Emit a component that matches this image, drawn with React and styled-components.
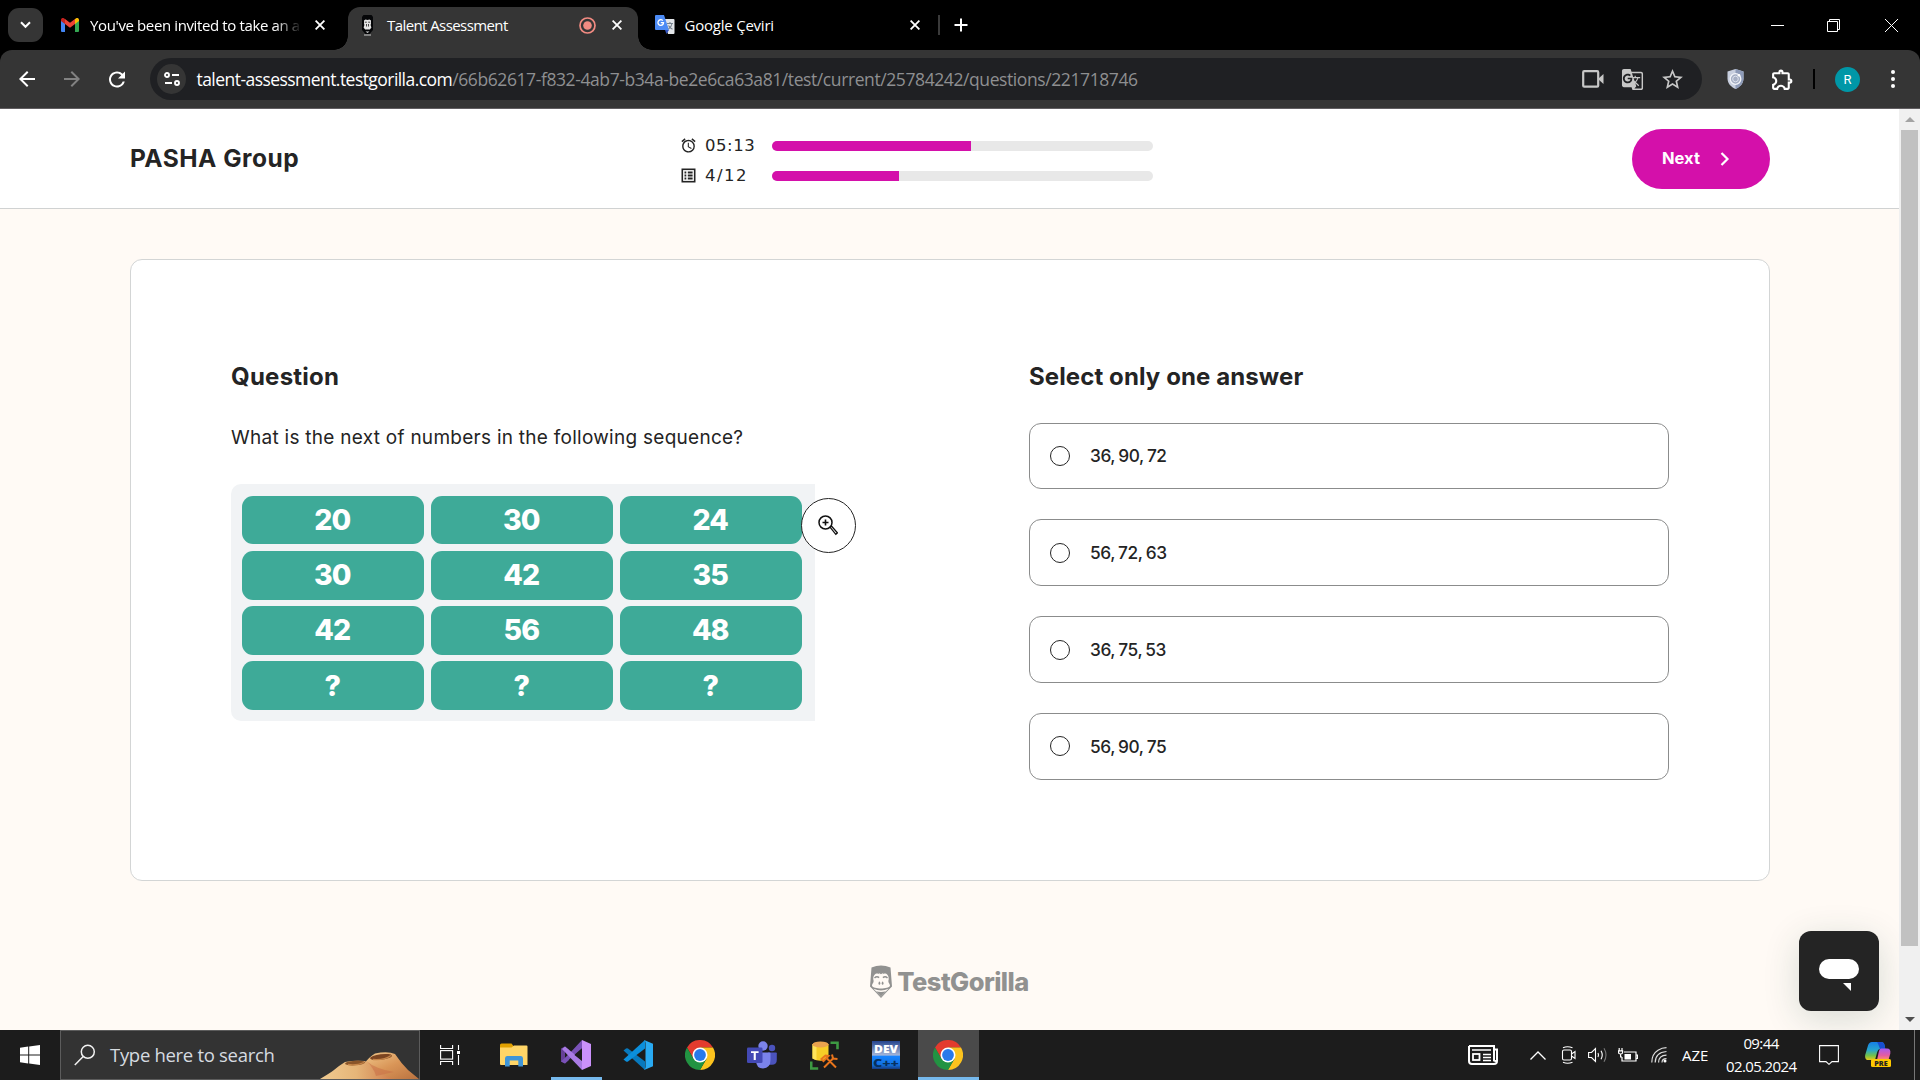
import React from "react";
import styled, { createGlobalStyle, css } from "styled-components";
import {
  MdStarBorder,
  MdOutlineExtension,
  MdGTranslate,
  MdArrowBack,
  MdArrowForward,
  MdRefresh,
  MdAlarm,
} from "react-icons/md";

const GlobalStyle = createGlobalStyle`
  * { box-sizing: border-box; }
  body { margin: 0; overflow: hidden; background: #fffaf5; }
`;

const ui = `"Open Sans", "Noto Sans", sans-serif`;
const sans = `Inter, "Liberation Sans", sans-serif`;

const Screen = styled.div`
  width: 1920px;
  height: 1080px;
  display: flex;
  flex-direction: column;
  overflow: hidden;
  font-family: ${sans};
  color: #242424;
`;

/* ---------- browser chrome ---------- */

const TabStrip = styled.div`
  height: 50px;
  flex: none;
  display: flex;
  align-items: stretch;
  background: #000;
  color: #fff;
  font-family: ${ui};
`;

const TabSearch = styled.div`
  width: 35px;
  height: 34px;
  margin: 8px 0 0 8px;
  border-radius: 11px;
  background: #353535;
  display: flex;
  align-items: center;
  justify-content: center;
`;

const Tab = styled.div`
  position: relative;
  width: ${(p) => p.$w}px;
  margin-top: 7px;
  padding: 0 ${(p) => p.$pr}px 7px ${(p) => p.$pl}px;
  display: flex;
  align-items: center;
  border-radius: 12px 12px 0 0;
  ${(p) =>
    p.$active &&
    css`
      background: #353535;
      &::before,
      &::after {
        content: "";
        position: absolute;
        bottom: 0;
        width: 14px;
        height: 14px;
      }
      &::before {
        left: -14px;
        background: radial-gradient(circle at 0 0, transparent 13.5px, #353535 14px);
      }
      &::after {
        right: -14px;
        background: radial-gradient(circle at 100% 0, transparent 13.5px, #353535 14px);
      }
    `}
`;

const TabTitle = styled.span`
  flex: 1;
  min-width: 0;
  margin-left: ${(p) => p.$ml}px;
  font-size: 15px;
  line-height: 20px;
  letter-spacing: ${(p) => p.$ls || 0}px;
  white-space: nowrap;
  ${(p) =>
    p.$fade &&
    css`
      mask-image: linear-gradient(to right, #000 88%, transparent 101%);
    `}
`;

const TabClose = styled.span`
  display: flex;
  margin-left: ${(p) => p.$ml || 0}px;
`;

const TabDivider = styled.div`
  width: 2px;
  height: 20px;
  margin: 15px 14px 0 0;
  background: #3a3a3a;
`;

const WindowButtons = styled.div`
  margin-left: auto;
  padding-right: 22px;
  display: flex;
  align-items: center;
  gap: 43px;
  svg:last-child {
    margin-left: 2px;
  }
`;

const Toolbar = styled.div`
  height: 59px;
  display: flex;
  align-items: center;
  padding: 0 25px 0 15px;
  background: #353535;
  border-bottom: 1px solid #605d60;
  border-radius: 12px 12px 0 0;
  color: #fff;
  font-family: ${ui};
`;

const ToolbarShell = styled.div`
  flex: none;
  height: 59px;
  background: #000;
`;

const NavIcon = styled.span`
  width: 24px;
  height: 24px;
  display: flex;
  margin-right: ${(p) => p.$mr}px;
  color: ${(p) => (p.$dim ? "#828282" : "#fff")};
`;

const AddressBar = styled.div`
  width: 1552px;
  flex: none;
  height: 42px;
  border-radius: 21px;
  background: #1f2023;
  display: flex;
  align-items: center;
  padding: 0 17px 0 7px;
`;

const SiteInfo = styled.span`
  width: 29px;
  height: 30px;
  border-radius: 50%;
  background: #353535;
  display: flex;
  align-items: center;
  justify-content: center;
`;

const Url = styled.span`
  flex: 1;
  margin-left: 10.5px;
  font-size: 17.5px;
  line-height: 24px;
  letter-spacing: -0.407px;
  color: #8e8f91;
  white-space: nowrap;
`;

const UrlHost = styled.span`
  color: #fff;
  letter-spacing: -0.55px;
`;

const BarIcons = styled.span`
  display: flex;
  align-items: center;
  gap: 16px;
  color: #c7c7c7;
  svg:first-child {
    margin-right: 1px;
  }
`;

const ExtensionArea = styled.div`
  margin-left: 25px;
  flex: 1;
  display: flex;
  align-items: center;
`;

const Extension = styled.span`
  display: flex;
  margin-left: 26px;
`;

const Separator = styled.span`
  width: 2px;
  height: 20px;
  margin: 0 20px 0 18px;
  background: #000;
`;

const Avatar = styled.span`
  width: 25px;
  height: 25px;
  border-radius: 50%;
  background: #0097a7;
  font: 13px Roboto, sans-serif;
  display: flex;
  align-items: center;
  justify-content: center;
`;

const Dots = styled.span`
  margin-left: auto;
  display: flex;
  flex-direction: column;
  gap: 3px;
  i {
    width: 4px;
    height: 4px;
    border-radius: 50%;
    background: #fff;
  }
`;

/* ---------- page ---------- */

const Viewport = styled.div`
  height: 921px;
  flex: none;
  display: flex;
`;

const Page = styled.main`
  position: relative;
  width: 1899px;
  background: #fffaf5;
  display: flex;
  flex-direction: column;
  align-items: center;
  overflow: hidden;
`;

const Header = styled.header`
  width: 100%;
  height: 100px;
  flex: none;
  padding: 0 129px 0 130px;
  display: grid;
  grid-template-columns: 550px 1fr auto;
  align-items: center;
  background: #fff;
  border-bottom: 1px solid #d0d2d2;
`;

const Company = styled.h1`
  margin: 0;
  padding-bottom: 2px;
  font-size: 24.5px;
  line-height: 30px;
  font-weight: 700;
  letter-spacing: 0.5px;
`;

const ProgressList = styled.div`
  display: flex;
  flex-direction: column;
  padding-top: 4.5px;
`;

const ProgressRow = styled.div`
  height: 30px;
  display: flex;
  align-items: center;
`;

const ProgressLabel = styled.span`
  width: 67px;
  margin-left: 8px;
  font-family: "DejaVu Sans", sans-serif;
  font-size: 16.5px;
  letter-spacing: ${(p) => p.$ls}px;
`;

const Track = styled.div`
  width: 381px;
  height: 10px;
  border-radius: 5px;
  background: #e8e8e8;
  overflow: hidden;
`;

const Fill = styled.div`
  width: ${(p) => p.$w}px;
  height: 100%;
  background: #d410aa;
`;

const NextButton = styled.button`
  width: 138px;
  height: 60px;
  border: 0;
  border-radius: 30px;
  background: #d410aa;
  color: #fff;
  padding: 0 40px 2px 30px;
  display: flex;
  align-items: center;
  justify-content: space-between;
  font: 700 16.5px/24px ${sans};
  svg {
    margin-top: 3px;
  }
`;

const Card = styled.section`
  width: 1640px;
  height: 622px;
  margin: 50px 0 0 1px;
  flex: none;
  border: 1px solid #d3d5d5;
  border-radius: 12px;
  background: #fff;
  padding: 99px 100px 0 100px;
  display: grid;
  grid-template-columns: 798px 640px;
`;

const Heading = styled.h2`
  margin: 0;
  font-size: 24px;
  line-height: 36px;
  font-weight: 700;
  letter-spacing: ${(p) => p.$ls || 0}px;
  white-space: nowrap;
`;

const Prompt = styled.p`
  margin: 28px 0 31px;
  font-size: 19px;
  line-height: 30px;
  letter-spacing: 0.27px;
`;

const Figure = styled.div`
  position: relative;
  width: 584px;
  height: 237px;
  padding: 11.5px 13px 0 10.6px;
  border-radius: 10px 0 0 10px;
  background: #f1f3f5;
  display: grid;
  grid-template-columns: repeat(3, 182.4px);
  grid-auto-rows: 48.8px;
  gap: 6.5px 6.6px;
`;

const Cell = styled.div`
  border-radius: 11px;
  background: #3eaa98;
  color: #fff;
  display: flex;
  align-items: center;
  justify-content: center;
  padding: 0 1px 1px 0;
  font-size: 28.5px;
  font-weight: 800;
  letter-spacing: -0.9px;
`;

const Magnifier = styled.div`
  position: absolute;
  left: 570px;
  top: 14px;
  width: 55px;
  height: 55px;
  border: 1px solid #242424;
  border-radius: 50%;
  background: #fff;
  display: flex;
  align-items: center;
  justify-content: center;
  padding-right: 2px;
`;

const Options = styled.div`
  margin-top: 27.5px;
  display: flex;
  flex-direction: column;
  gap: 30.2px;
`;

const Option = styled.label`
  height: 66.7px;
  border: 1px solid #8b8c8c;
  border-radius: 12px;
  padding: 0 20px;
  display: flex;
  align-items: center;
  gap: 20px;
  font-size: 17.3px;
  font-weight: 500;
  letter-spacing: -0.4px;
  word-spacing: -1px;
`;

const Radio = styled.span`
  width: 20px;
  height: 20px;
  border: 1px solid #242424;
  border-radius: 50%;
`;

const FooterLogo = styled.div`
  margin-top: 84px;
  height: 33px;
  display: flex;
  align-items: center;
  gap: 5px;
  color: #919190;
  font-size: 25.5px;
  line-height: 33px;
  font-weight: 800;
  letter-spacing: -0.55px;
`;

const Chat = styled.div`
  position: absolute;
  right: 20px;
  top: 822px;
  width: 80px;
  height: 80px;
  border-radius: 12px;
  background: #242424;
  box-shadow: 0 8px 36px rgba(10, 60, 50, 0.16);
`;

const Scrollbar = styled.div`
  width: 21px;
  background: #f0f0f0;
  display: flex;
  flex-direction: column;
  align-items: center;
`;

const ScrollArrow = styled.div`
  height: 21px;
  display: flex;
  align-items: center;
`;

const Thumb = styled.div`
  width: 17px;
  height: 816px;
  margin-bottom: auto;
  background: #c1c1c1;
`;

/* ---------- taskbar ---------- */

const Taskbar = styled.footer`
  height: 50px;
  flex: none;
  display: flex;
  align-items: stretch;
  background: #1c1c1c;
  color: #fff;
  font-family: ${ui};
`;

const StartButton = styled.div`
  width: 60px;
  display: flex;
  align-items: center;
  justify-content: center;
`;

const SearchBox = styled.div`
  width: 360px;
  border: 1px solid #5c5c5c;
  background: #333;
  display: flex;
  align-items: center;
  padding-left: 13px;
  color: #d6dbe0;
  font-size: 18.5px;
  letter-spacing: -0.3px;
  span {
    margin: 0 auto 2px 14px;
    white-space: nowrap;
  }
  svg:last-child {
    align-self: flex-end;
  }
`;

const TaskView = styled.div`
  width: 63px;
  display: flex;
  align-items: center;
  padding-left: 20px;
`;

const TaskButton = styled.div`
  width: ${(p) => (p.$active ? 61 : 62)}px;
  margin-left: ${(p) => (p.$active ? 1 : 0)}px;
  padding-right: ${(p) => (p.$active ? 1 : 0)}px;
  display: flex;
  align-items: center;
  justify-content: center;
  background: ${(p) => (p.$active ? "#4a4a4a" : "transparent")};
  background-image: ${(p) => (p.$bar ? "linear-gradient(#76b9ed, #76b9ed)" : "none")};
  background-size: ${(p) => p.$bar || 0}px 3px;
  background-position: center bottom;
  background-repeat: no-repeat;
`;

const Tray = styled.div`
  margin-left: auto;
  display: flex;
  align-items: center;
`;

const TrayItem = styled.span`
  width: ${(p) => p.$w}px;
  display: flex;
  justify-content: center;
  margin-right: ${(p) => p.$mr}px;
`;

const Lang = styled.span`
  width: 27px;
  margin-right: 17px;
  font-size: 15px;
  letter-spacing: 0;
  white-space: nowrap;
`;

const Clock = styled.div`
  width: 70px;
  margin-right: 23px;
  text-align: center;
  font-size: 15px;
  line-height: 23px;
  letter-spacing: -0.6px;
  white-space: nowrap;
`;

const ShowDesktop = styled.div`
  align-self: stretch;
  width: 6px;
  border-left: 1px solid #777;
`;

/* ---------- icons ---------- */

const XIcon = ({ s = 10 }) => (
  <svg width={s} height={s} viewBox="0 0 10 10" stroke="#fff" strokeWidth="1.8">
    <path d="M.6.6l8.8 8.8M9.4.6L.6 9.4" />
  </svg>
);

const GmailIcon = () => (
  <svg width="18" height="14" viewBox="0 0 18 14">
    <path d="M0 2v11a1 1 0 001 1h3V5z" fill="#4285f4" />
    <path d="M18 2v11a1 1 0 01-1 1h-3V5z" fill="#34a853" />
    <path d="M14 1v5l4-3V2c0-2-2-2.600-3.200-1.600z" fill="#fbbc04" />
    <path d="M0 2v1l4 3V1L3.200.4C2-.6 0 0 0 2z" fill="#c5221f" />
    <path d="M4 1v5l5 3.800L14 6V1L9 4.800z" fill="#ea4335" />
  </svg>
);

const GorillaIcon = () => (
  <svg width="22" height="33" viewBox="0 0 22 33">
    <path d="M1.500 2.500Q11-1.500 20.500 2.500L22 21.500 17.500 26 11 33 4.500 26 0 21.500z" fill="#919190" />
    <path
      d="M3.300 14.500C3 9 7 7.500 9.600 9.300L8.600 7.800 11 9.200 13.400 7.800 12.400 9.300C15 7.500 19 9 18.700 14.500 17.500 17.500 20 18.500 20 20.800 18.500 24.400 3.500 24.400 2 20.800 2 18.500 4.500 17.500 3.300 14.500z"
      fill="#fffaf5"
    />
    <path d="M4.500 13q2.300-2.200 4.600-.3M12.900 12.700q2.300-1.900 4.600.3" stroke="#919190" strokeWidth="1.500" fill="none" />
    <ellipse cx="9.400" cy="18.200" rx=".9" ry="1.600" fill="#919190" />
    <ellipse cx="12.600" cy="18.200" rx=".9" ry="1.600" fill="#919190" />
    <path d="M3.500 23.800q7.500 3.600 15 0L11 31.500z" fill="#fffaf5" />
    <path d="M6 26.300q5 1.400 10 0L11 31.500z" fill="#919190" />
  </svg>
);

const GorillaFavicon = () => (
  <svg width="11" height="21" viewBox="0 0 11 21">
    <path d="M1.500 0h8L11 2v13L7.500 19h-4L0 15V2z" fill="#050608" />
    <path d="M2 5.500l1.500-1 2 .6 2-.6 1.500 1v3L8.600 10l.8 2.500-1.500 2H3.100l-1.500-2L2.400 10 2 8.500z" fill="#e6e6e6" />
    <path d="M2.800 7.200h2M6.200 7.200h2M4.500 9v2.500M6.500 9v2.500" stroke="#333" strokeWidth=".9" />
    <path d="M3.500 16.500h4l-2 1.500z" fill="#ddd" />
    <path d="M2 20h7" stroke="#b5b5b5" strokeWidth="1.200" />
  </svg>
);

const RecordIcon = () => (
  <svg width="17" height="17" viewBox="0 0 17 17">
    <circle cx="8.500" cy="8.500" r="7.500" fill="none" stroke="#f28b82" strokeWidth="1.700" />
    <circle cx="8.500" cy="8.500" r="4.300" fill="#f28b82" />
  </svg>
);

const TranslateIcon = () => (
  <svg width="20" height="20" viewBox="0 0 20 20">
    <path d="M8 4h10.500q1 0 1 1v13q0 1-1 1H13z" fill="#e3e6ea" />
    <path d="M1 0h8l5 15H1q-1 0-1-1V1q0-1 1-1z" fill="#4c8bf5" />
    <path d="M10 15h4l-2.500 4z" fill="#3052c0" />
    <path d="M5.800 7.600h2.700q0 2.700-2.700 2.700a2.800 2.800 0 112-4.700" stroke="#fff" strokeWidth="1.300" fill="none" />
    <path d="M12 8.500h6M15 7v1.500M17 8.500c-.5 3-2 4.500-3.500 5.500M13.500 10.500c1 2 2.500 3 4 3.800" stroke="#78838f" strokeWidth="1.100" fill="none" />
  </svg>
);

const TuneIcon = () => (
  <svg width="16" height="14" viewBox="0 0 16 14" fill="none" stroke="#fff" strokeWidth="1.900">
    <circle cx="3" cy="3" r="2" />
    <path d="M8 3h7M1 11h7" />
    <circle cx="13" cy="11" r="2" />
  </svg>
);

const CameraIcon = () => (
  <svg width="22" height="18" viewBox="0 0 22 18">
    <rect x="1.200" y="1.200" width="15" height="15.500" rx="1" fill="none" stroke="#c7c7c7" strokeWidth="2.200" />
    <path d="M16 9l5.500-5v10z" fill="#c7c7c7" />
  </svg>
);

const ShieldIcon = () => (
  <svg width="17" height="20" viewBox="0 0 17 20">
    <path d="M8.500 0l8 2.500v7c0 5-3.500 8.500-8 10.500C4 18 .5 14.500.5 9.500v-7z" fill="#c8cfdf" />
    <path d="M8.500 0l8 2.500v7c0 5-3.500 8.500-8 10.500z" fill="#8e9bb8" />
    <circle cx="8.500" cy="10" r="5.300" fill="#a6afc4" stroke="#f2f4f9" strokeWidth="1.300" />
    <circle cx="8.500" cy="10" r="2.800" fill="none" stroke="#dde2ee" />
    <circle cx="12" cy="6.300" r="1.300" fill="#fff" />
  </svg>
);

const QuestionListIcon = () => (
  <svg width="17" height="17" viewBox="0 0 17 17" fill="none" stroke="#242424">
    <rect x="2.300" y="2.300" width="12.400" height="12.400" strokeWidth="1.600" />
    <path d="M4.500 5.500h1.800M4.500 8.500h1.800M4.500 11.500h1.800M7.800 5.500h4.800M7.800 8.500h4.800M7.800 11.500h4.800" strokeWidth="1.800" />
  </svg>
);

const ZoomInIcon = () => (
  <svg width="20" height="21" viewBox="0 0 20 21" fill="none" stroke="#111">
    <circle cx="7.500" cy="7.500" r="6.500" strokeWidth="1.500" />
    <path d="M7.500 4.500v6M4.500 7.500h6" strokeWidth="1.600" />
    <path d="M12 12.200l1.400-1.200 6 6.800-1.600 1.500z" strokeWidth="1.300" />
  </svg>
);

const WindowsIcon = () => (
  <svg width="20" height="20" viewBox="0 0 20 20" fill="#fff">
    <path d="M0 2.700L8.200 1.600v7.900H0zM9.200 1.400L20 0v9.500H9.200zM0 10.500h8.200v7.900L0 17.300zM9.200 10.500H20V20L9.200 18.600z" />
  </svg>
);

const SearchIcon = () => (
  <svg width="22" height="22" viewBox="0 0 22 22" fill="none" stroke="#f2f2f2" strokeWidth="1.500">
    <circle cx="13.800" cy="7.800" r="6.500" />
    <path d="M9.200 12.500L.8 21" />
  </svg>
);

const Dunes = () => (
  <svg width="99" height="27" viewBox="0 0 99 27">
    <defs>
      <linearGradient id="duneA" x1="0" x2="1">
        <stop offset="0" stopColor="#f0cb91" />
        <stop offset=".5" stopColor="#e6b578" />
        <stop offset="1" stopColor="#cf7d4c" />
      </linearGradient>
      <linearGradient id="duneB" x1="0" x2="1" y2="1">
        <stop offset="0" stopColor="#f1c98c" />
        <stop offset=".5" stopColor="#d99557" />
        <stop offset="1" stopColor="#b9713f" />
      </linearGradient>
    </defs>
    <path d="M44 12Q49 5 55 1.500Q68-1 75 2Q81 11 88 18L99 27H44z" fill="url(#duneB)" />
    <path d="M0 27Q10 21 14 18 20 13 25 10q10-2 20-1Q54 18 73 27z" fill="url(#duneA)" />
    <path d="M46 9q10 8 28 11l-18 4q-2-8-10-15z" fill="#c96f47" opacity=".55" />
    <ellipse cx="35" cy="11" rx="10" ry="2.300" fill="#8a5529" transform="rotate(-4 35 11)" />
    <ellipse cx="61" cy="5" rx="11" ry="2.800" fill="#7c4521" transform="rotate(-7 61 5)" />
    <path d="M28 12.500q8 1.500 16-2M53 7.500q11 1 18-4" stroke="#c58549" fill="none" strokeWidth="1.300" />
  </svg>
);

const TaskViewIcon = () => (
  <svg width="20" height="20" viewBox="0 0 20 20" fill="none" stroke="#fff" strokeWidth="1.100">
    <path d="M.6 0v3.500h12V0M.6 20v-3.500h12V20M18.500 0v5M18.500 10v10" />
    <rect x=".6" y="5.600" width="12" height="8.500" />
    <rect x="17" y="6" width="3" height="3" fill="#fff" stroke="none" />
  </svg>
);

const ExplorerIcon = () => (
  <svg width="28" height="24" viewBox="0 0 28 24">
    <path d="M0 2q0-1.500 1.500-1.500h10L13.500 3H26v3H0z" fill="#e0a000" />
    <path d="M0 4.500h11.500L14 2.500h12.500q1 0 1 1V22H1q-1 0-1-1z" fill="#ffd567" />
    <path d="M5 23.500v-8Q5 13 7 13h14q2 0 2 2.500v8h-4.700v-6H9.700v6z" fill="#3f95d8" />
  </svg>
);

const VisualStudioIcon = () => (
  <svg width="30" height="30" viewBox="0 0 30 30">
    <path d="M0 8.500L4 6.500 8 10 8 20 4 23.500 0 21.500z" fill="#654097" />
    <path d="M4 11.500v7l3.500-3.500z" fill="#1c1c1c" />
    <path d="M4 23.500L0 21.500 8 14 21 0l2.500 6L8 19.500z" fill="#7a52b8" />
    <path d="M4 6.500L21 20.500V30L1 9z" fill="#a97be4" />
    <path d="M21 0l9 4v22l-9 4z" fill="#cb91fb" />
    <path d="M21 9v12l-7.500-6z" fill="#1c1c1c" />
  </svg>
);

const VsCodeIcon = () => (
  <svg width="30" height="30" viewBox="0 0 30 30">
    <path d="M.5 10.500L3 8.500q1-.5 2 0L22 21.500V30z" fill="#0879bd" />
    <path d="M.5 19.500L3 21.500q1 .5 2 0L22 8.500V0z" fill="#0b8fdc" />
    <path d="M21 0l9 3.800v22.400L21 30q1.500-1 1.500-3V3q0-2-1.500-3z" fill="#29aaf2" />
  </svg>
);

const ChromeIcon = () => (
  <svg width="30" height="30" viewBox="0 0 30 30">
    <path d="M2 7.500A15 15 0 0128 7.500H15L8.500 18.750z" fill="#e33b2e" />
    <path d="M28 7.500A15 15 0 0115 30L21.500 18.750 15 7.500z" fill="#fcc31e" />
    <path d="M15 30A15 15 0 012 7.500L8.500 18.750H21.500z" fill="#229342" />
    <circle cx="15" cy="15" r="7.500" fill="#fff" />
    <circle cx="15" cy="15" r="5.900" fill="#2979ea" />
  </svg>
);

const TeamsIcon = () => (
  <svg width="30" height="28" viewBox="0 0 30 28">
    <circle cx="25" cy="7" r="3.200" fill="#4b53bc" />
    <circle cx="16" cy="5" r="4.700" fill="#7b83eb" />
    <path d="M21 11.500h8q.8 0 .8.800v6.500q0 5-5 5H21z" fill="#4b53bc" />
    <path d="M9 11.500h13.500q1 0 1 1V19q0 8-7.500 8.500Q9.500 27.500 9 20z" fill="#7b83eb" />
    <rect y="6.500" width="15.500" height="15.500" rx="1.300" fill="#4349b4" />
    <path d="M4 10.200h7.600v1.900H8.800v7H6.700v-7H4z" fill="#fff" />
  </svg>
);

const SqlIcon = () => (
  <svg width="29" height="29" viewBox="0 0 29 29">
    <path d="M2.500 3v14.500q8 4.500 16 0V3z" fill="#f7cd27" />
    <path d="M2.500 3v14.500q2 1.200 4 1.500V4z" fill="#ffe45a" />
    <ellipse cx="10.500" cy="3.400" rx="8" ry="3" fill="#e9a24e" />
    <path d="M20.500 1.800h7v6.500M1.200 20.500v7h7" stroke="#3d9a42" strokeWidth="2.600" fill="none" />
    <path d="M14 26.500L24 16M16.500 17L26.500 27" stroke="#1c1c1c" strokeWidth="4" />
    <path d="M14 26.500L24 16.500M16.500 17L26 26.500M11.500 18l4-3.500 3 .5-5 5zM22 13.500l1 4 4.500.5" stroke="#e8741c" strokeWidth="2" fill="none" />
  </svg>
);

const DevIcon = () => (
  <svg width="28" height="28" viewBox="0 0 28 28" fontFamily="Open Sans, sans-serif" fontWeight="800">
    <defs>
      <linearGradient id="dev" x2="0" y2="1">
        <stop offset="0" stopColor="#25458e" />
        <stop offset=".5" stopColor="#a3b4d8" />
        <stop offset=".55" stopColor="#1683ff" />
        <stop offset=".85" stopColor="#1270df" />
        <stop offset="1" stopColor="#173c80" />
      </linearGradient>
    </defs>
    <rect width="28" height="28" fill="url(#dev)" />
    <text x="2" y="12" fontSize="10.500" fill="#fff" textLength="24" lengthAdjust="spacingAndGlyphs">DEV</text>
    <text x="1" y="26" fontSize="10" fill="#06305e" textLength="26" lengthAdjust="spacingAndGlyphs">C++</text>
  </svg>
);

const NewsIcon = () => (
  <svg width="30" height="20" viewBox="0 0 30 20" fill="none" stroke="#fff" strokeWidth="2">
    <path d="M1 1h25v14.500a3.300 3.300 0 003 0V4.500h-3M1 1v15q0 3 3 3h22q3 0 3-3" />
    <path d="M4 5h19M15 9.500h8M15 12.500h8M15 15.500h8" strokeWidth="1.600" />
    <rect x="5" y="9" width="6.500" height="6" strokeWidth="1.800" />
  </svg>
);

const MeetIcon = () => (
  <svg width="16" height="18" viewBox="0 0 16 18" fill="none" stroke="#fff" strokeWidth="1.100">
    <rect x="1.500" y="4" width="9" height="10" rx="1.500" />
    <path d="M10.500 8l3.500-2.500v7L10.500 10M2 1.800Q6.500-.2 11.500 1.800M2 16.200q4.500 2 9.500 0" />
  </svg>
);

const SpeakerIcon = () => (
  <svg width="20" height="18" viewBox="0 0 20 18" fill="none" stroke="#fff" strokeWidth="1.100">
    <path d="M.6 6.500h2.900L7.500 2.500v13l-4-4H.6z" />
    <path d="M10 7q1 2 0 4M13 4.800q2.500 4.200 0 8.400" />
    <path d="M16 2.200q4 6.800 0 13.600" stroke="#777" />
  </svg>
);

const BatteryIcon = () => (
  <svg width="20" height="15" viewBox="0 0 20 15" fill="none" stroke="#fff" strokeWidth="1.200">
    <path d="M6 4h12v9H4V9M18.500 7h1v3.500h-1M1.200 0v2.500M4 0v2.500M.6 2.800h4v1.700q0 1.500-2 1.500t-2-1.500zM2.600 6v3H4" />
    <rect x="6.500" y="6" width="6.500" height="5.500" fill="#fff" stroke="none" />
  </svg>
);

const WifiIcon = () => (
  <svg width="16" height="16" viewBox="0 0 16 16" fill="none" stroke="#ddd" strokeWidth="1.200">
    <path d="M.8 15.500Q.8 7 7 3.200q4-2.500 8.500-2.500M4.200 15.500Q4.200 5.500 15.500 4.500M7.600 15.500Q7.600 8.500 15.500 8.200M11 15.500q0-3.800 4.500-3.800" />
    <circle cx="14" cy="14" r="1.500" fill="#fff" stroke="none" />
  </svg>
);

const NotificationIcon = () => (
  <svg width="20" height="20" viewBox="0 0 20 20" fill="none" stroke="#fff" strokeWidth="1.100">
    <path d="M.6.6h18.800v16H13L10 19.300 7 16.600H.6z" />
  </svg>
);

const CopilotIcon = () => (
  <svg width="26" height="26" viewBox="0 0 26 26">
    <defs>
      <linearGradient id="copA" x2="0" y2="1">
        <stop offset="0" stopColor="#1680e8" />
        <stop offset=".45" stopColor="#27a6cd" />
        <stop offset=".75" stopColor="#73c14b" />
        <stop offset="1" stopColor="#e4c91d" />
      </linearGradient>
      <linearGradient id="copB" x2="0" y2="1">
        <stop offset="0" stopColor="#a65af0" />
        <stop offset=".6" stopColor="#e55ca2" />
        <stop offset="1" stopColor="#ff9364" />
      </linearGradient>
    </defs>
    <path d="M7 0h9q3 0 3.500 3l.8 4H15q-2 0-2.800 3L10 18H3.500Q-.5 18 .2 13L3 3.500Q4 0 7 0z" fill="url(#copA)" />
    <path d="M12 0h4q3 0 3.500 3l.8 4H15q-2-6-3-7z" fill="#174ed0" />
    <path d="M16 6.500h6q4 0 3.300 5L23.500 18H12l2-9q.6-2.500 2-2.500z" fill="url(#copB)" />
    <rect x="6" y="17" width="20" height="8" rx="1.500" fill="#fec800" />
    <text x="16" y="23.600" fontFamily="Open Sans, sans-serif" fontWeight="800" fontSize="7.200" fill="#222" textAnchor="middle">PRE</text>
  </svg>
);

const cells = ["20", "30", "24", "30", "42", "35", "42", "56", "48", "?", "?", "?"];
const answers = ["36, 90, 72", "56, 72, 63", "36, 75, 53", "56, 90, 75"];

const apps = [
  { id: "explorer", icon: <ExplorerIcon /> },
  { id: "vs", icon: <VisualStudioIcon />, bar: 51 },
  { id: "code", icon: <VsCodeIcon /> },
  { id: "chrome", icon: <ChromeIcon /> },
  { id: "teams", icon: <TeamsIcon /> },
  { id: "sql", icon: <SqlIcon /> },
  { id: "dev", icon: <DevIcon /> },
  { id: "chrome-active", icon: <ChromeIcon />, bar: 61, active: true },
];

export default function App() {
  return (
    <Screen>
      <GlobalStyle />
      <TabStrip>
        <TabSearch>
          <svg width="11" height="8" viewBox="0 0 11 8" fill="none" stroke="#fff" strokeWidth="2">
            <path d="M1 1.200l4.500 4.600L10 1.200" />
          </svg>
        </TabSearch>
        <Tab $w={305} $pl={18} $pr={23}>
          <GmailIcon />
          <TabTitle $ml={11} $ls={-0.38} $fade>You've been invited to take an a</TabTitle>
          <TabClose $ml={15}><XIcon /></TabClose>
        </Tab>
        <Tab $w={290} $pl={14} $pr={16} $active>
          <GorillaFavicon />
          <TabTitle $ml={14} $ls={-0.58}>Talent Assessment</TabTitle>
          <RecordIcon />
          <TabClose $ml={16}><XIcon /></TabClose>
        </Tab>
        <Tab $w={300} $pl={17} $pr={18}>
          <TranslateIcon />
          <TabTitle $ml={9.5} $ls={-0.22}>Google Çeviri</TabTitle>
          <TabClose><XIcon /></TabClose>
        </Tab>
        <TabDivider />
        <svg width="14" height="50" viewBox="0 0 14 50" stroke="#fff" strokeWidth="2">
          <path d="M7 18.500v13M.5 25h13" />
        </svg>
        <WindowButtons>
          <svg width="13" height="13" viewBox="0 0 13 13"><path d="M0 6.500h13" stroke="#fff" /></svg>
          <svg width="13" height="13" viewBox="0 0 13 13" fill="none" stroke="#fff">
            <path d="M.5 2.500h10v10H.5zM2.500 2.500v-2h10v10h-2" />
          </svg>
          <svg width="13" height="13" viewBox="0 0 13 13" stroke="#fff"><path d="M0 0l13 13M13 0L0 13" /></svg>
        </WindowButtons>
      </TabStrip>
      <ToolbarShell>
        <Toolbar>
          <NavIcon $mr={21}><MdArrowBack size={24} /></NavIcon>
          <NavIcon $mr={21} $dim><MdArrowForward size={24} /></NavIcon>
          <NavIcon $mr={21}><MdRefresh size={25} /></NavIcon>
          <AddressBar>
            <SiteInfo><TuneIcon /></SiteInfo>
            <Url>
              <UrlHost>talent-assessment.testgorilla.com</UrlHost>
              /66b62617-f832-4ab7-b34a-be2e6ca63a81/test/current/25784242/questions/221718746
            </Url>
            <BarIcons>
              <CameraIcon />
              <MdGTranslate size={23} />
              <MdStarBorder size={25} />
            </BarIcons>
          </AddressBar>
          <ExtensionArea>
            <ShieldIcon />
            <Extension><MdOutlineExtension size={25} /></Extension>
            <Separator />
            <Avatar>R</Avatar>
            <Dots><i /><i /><i /></Dots>
          </ExtensionArea>
        </Toolbar>
      </ToolbarShell>

      <Viewport>
        <Page>
          <Header>
            <Company>PASHA Group</Company>
            <ProgressList>
              <ProgressRow>
                <MdAlarm size={17} />
                <ProgressLabel $ls={0.55}>05:13</ProgressLabel>
                <Track><Fill $w={199} /></Track>
              </ProgressRow>
              <ProgressRow>
                <QuestionListIcon />
                <ProgressLabel $ls={1.5}>4/12</ProgressLabel>
                <Track><Fill $w={127} /></Track>
              </ProgressRow>
            </ProgressList>
            <NextButton>
              Next
              <svg width="10" height="14" viewBox="0 0 10 14" fill="none" stroke="#fff" strokeWidth="2.200">
                <path d="M1.500 1l6 6-6 6" />
              </svg>
            </NextButton>
          </Header>
          <Card>
            <div>
              <Heading $ls={0.25}>Question</Heading>
              <Prompt>What is the next of numbers in the following sequence?</Prompt>
              <Figure>
                {cells.map((c, i) => <Cell key={i}>{c}</Cell>)}
                <Magnifier><ZoomInIcon /></Magnifier>
              </Figure>
            </div>
            <div>
              <Heading $ls={0.1}>Select only one answer</Heading>
              <Options>
                {answers.map((a) => (
                  <Option key={a}><Radio />{a}</Option>
                ))}
              </Options>
            </div>
          </Card>
          <FooterLogo><GorillaIcon />TestGorilla</FooterLogo>
          <Chat>
            <svg width="80" height="80" viewBox="0 0 80 80" fill="#fff">
              <rect x="20" y="28" width="40" height="20" rx="10" />
              <path d="M44 52h8v8z" />
            </svg>
          </Chat>
        </Page>
        <Scrollbar>
          <ScrollArrow><svg width="10" height="5" viewBox="0 0 10 5"><path d="M5 0l5 5H0z" fill="#a3a3a3" /></svg></ScrollArrow>
          <Thumb />
          <ScrollArrow><svg width="10" height="5" viewBox="0 0 10 5"><path d="M0 0h10L5 5z" fill="#505050" /></svg></ScrollArrow>
        </Scrollbar>
      </Viewport>

      <Taskbar>
        <StartButton><WindowsIcon /></StartButton>
        <SearchBox>
          <SearchIcon />
          <span>Type here to search</span>
          <Dunes />
        </SearchBox>
        <TaskView><TaskViewIcon /></TaskView>
        {apps.map((a) => (
          <TaskButton key={a.id} $bar={a.bar} $active={a.active}>{a.icon}</TaskButton>
        ))}
        <Tray>
          <TrayItem $w={30} $mr={32}><NewsIcon /></TrayItem>
          <TrayItem $w={16} $mr={15}>
            <svg width="16" height="9" viewBox="0 0 16 9" fill="none" stroke="#fff" strokeWidth="1.300"><path d="M.5 8.500L8 1l7.500 7.500" /></svg>
          </TrayItem>
          <TrayItem $w={16} $mr={11}><MeetIcon /></TrayItem>
          <TrayItem $w={20} $mr={10}><SpeakerIcon /></TrayItem>
          <TrayItem $w={20} $mr={13}><BatteryIcon /></TrayItem>
          <TrayItem $w={16} $mr={15}><WifiIcon /></TrayItem>
          <Lang>AZE</Lang>
          <Clock>09:44<br />02.05.2024</Clock>
          <TrayItem $w={20} $mr={26}><NotificationIcon /></TrayItem>
          <TrayItem $w={26} $mr={23}><CopilotIcon /></TrayItem>
          <ShowDesktop />
        </Tray>
      </Taskbar>
    </Screen>
  );
}
